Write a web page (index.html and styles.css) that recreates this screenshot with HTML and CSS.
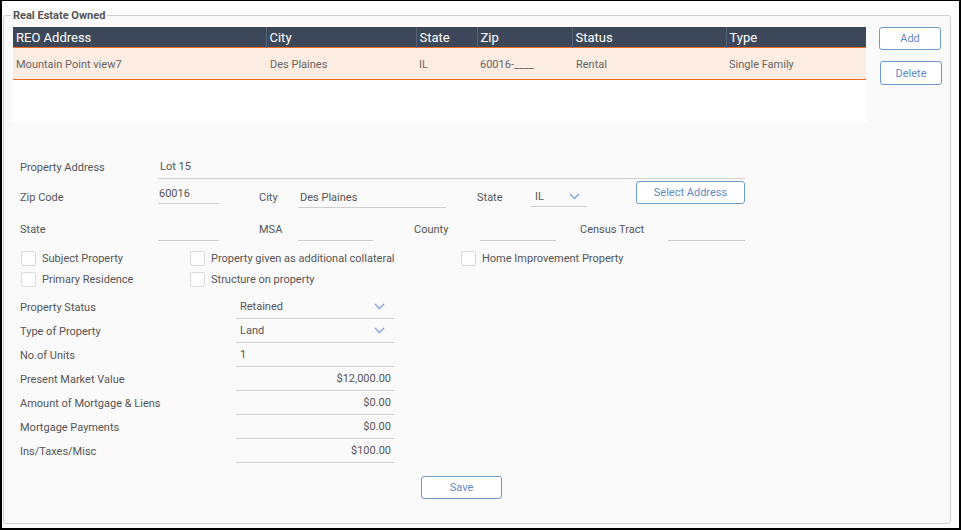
FILE: index.html
```html
<!DOCTYPE html>
<html>
<head>
<meta charset="utf-8">
<link rel="stylesheet" href="styles.css">
</head>
<body>
<div class="frame">
  <fieldset class="reo">
    <legend>Real Estate Owned</legend>
    <div class="top">
      <div class="grid">
        <table class="tbl">
          <colgroup>
            <col style="width:253px"><col style="width:150px"><col style="width:61px"><col style="width:95px"><col style="width:154px"><col style="width:140px">
          </colgroup>
          <thead>
            <tr><th>REO Address</th><th>City</th><th>State</th><th>Zip</th><th>Status</th><th class="last">Type</th></tr>
          </thead>
          <tbody>
            <tr class="sel"><td>Mountain Point view7</td><td>Des Plaines</td><td>IL</td><td>60016-____</td><td>Rental</td><td>Single Family</td></tr>
          </tbody>
        </table>
      </div>
      <div class="side">
        <button class="btn add">Add</button>
        <button class="btn del">Delete</button>
      </div>
    </div>

    <div class="form">
      <div class="row r1">
        <span class="lbl w138">Property Address</span>
        <span class="inp addr">Lot 15</span>
      </div>
      <div class="row r2">
        <span class="lbl w138">Zip Code</span>
        <span class="inp zip">60016</span>
        <span class="lbl city-l">City</span>
        <span class="inp city">Des Plaines</span>
        <span class="lbl state-l">State</span>
        <span class="inp sel state"><span>IL</span><svg class="chev" width="11" height="7" viewBox="0 0 11 7"><path d="M1 1l4.5 4.5L10 1" fill="none" stroke="#7ea3d6" stroke-width="1.4"/></svg></span>
        <button class="btn seladdr">Select Address</button>
      </div>
      <div class="row r3">
        <span class="lbl w138">State</span>
        <span class="inp e1"></span>
        <span class="lbl msa-l">MSA</span>
        <span class="inp e2"></span>
        <span class="lbl county-l">County</span>
        <span class="inp e3"></span>
        <span class="lbl census-l">Census Tract</span>
        <span class="inp e4"></span>
      </div>
      <div class="checks c1">
        <label class="chk g1"><span class="box"></span>Subject Property</label>
        <label class="chk g2"><span class="box"></span>Property given as additional collateral</label>
        <label class="chk"><span class="box"></span>Home Improvement Property</label>
      </div>
      <div class="checks c2">
        <label class="chk g1"><span class="box"></span>Primary Residence</label>
        <label class="chk g2"><span class="box"></span>Structure on property</label>
      </div>

      <div class="list">
        <div class="lrow"><span class="lbl w216">Property Status</span><span class="linp"><span>Retained</span><svg class="chev2" width="11" height="7" viewBox="0 0 11 7"><path d="M1 1l4.5 4.5L10 1" fill="none" stroke="#7ea3d6" stroke-width="1.4"/></svg></span></div>
        <div class="lrow"><span class="lbl w216">Type of Property</span><span class="linp"><span>Land</span><svg class="chev2" width="11" height="7" viewBox="0 0 11 7"><path d="M1 1l4.5 4.5L10 1" fill="none" stroke="#7ea3d6" stroke-width="1.4"/></svg></span></div>
        <div class="lrow"><span class="lbl w216">No.of Units</span><span class="linp">1</span></div>
        <div class="lrow"><span class="lbl w216">Present Market Value</span><span class="linp num">$12,000.00</span></div>
        <div class="lrow"><span class="lbl w216">Amount of Mortgage &amp; Liens</span><span class="linp num">$0.00</span></div>
        <div class="lrow"><span class="lbl w216">Mortgage Payments</span><span class="linp num">$0.00</span></div>
        <div class="lrow"><span class="lbl w216">Ins/Taxes/Misc</span><span class="linp num">$100.00</span></div>
      </div>

      <button class="btn save">Save</button>
    </div>
  </fieldset>
</div>
</body>
</html>
```

FILE: styles.css
```css
* { box-sizing: border-box; }
html, body { margin: 0; padding: 0; background: #fff; }
body { font-family: Roboto, "Noto Sans", Arial, sans-serif; font-size: 11px; color: #555; }

.frame {
  width: 961px;
  height: 530px;
  border: 2px solid #000;
  border-top-width: 1px;
  padding: 8px 0 0 1px;
}

.reo {
  margin: 0;
  width: 948px;
  height: 515px;
  border: 1px solid #d0d0d0;
  border-radius: 3px;
  background: #fafafa;
  padding: 5px 0 0 9px;
  min-width: 0;
}
.reo legend {
  font-weight: bold;
  font-size: 11px;
  line-height: 13px;
  color: #555;
  padding: 0 2px;
  margin-left: -2px;
}

.top { display: flex; align-items: flex-start; }
.grid {
  width: 853px;
  height: 95px;
  background: #fff;
}
.tbl {
  border-collapse: collapse;
  table-layout: fixed;
  width: 853px;
}
.tbl th {
  background: #3c4859;
  color: #fff;
  font-weight: normal;
  font-size: 13px;
  text-align: left;
  height: 20px;
  padding: 1px 0 0 3px;
  line-height: 19px;
  border-right: 1px solid #55627a;
  white-space: nowrap;
}
.tbl th.last { border-right: none; }
.tbl td {
  background: #fdece1;
  color: #666;
  font-size: 11px;
  height: 32px;
  padding: 2px 0 0 3px;
  border-top: 1px solid #f26b1d;
  border-bottom: 1px solid #f26b1d;
  white-space: nowrap;
}
.tbl td:nth-child(2) { padding-left: 4px; }
.tbl td:nth-child(4) { padding-left: 3px; }
.tbl td:nth-child(5) { padding-left: 4px; }

.side { display: flex; flex-direction: column; margin-left: 13px; }
.btn {
  font-family: Roboto, "Noto Sans", Arial, sans-serif;
  font-size: 11px;
  color: #5e8ac7;
  background: #fff;
  border: 1px solid #6f98cd;
  border-radius: 3px;
  padding: 0;
  cursor: pointer;
}
.add { width: 62px; height: 23px; }
.del { width: 62px; height: 24px; margin-top: 11px; margin-left: 1px; }

.form { padding-left: 7px; margin-top: 33px; }
.row { display: flex; align-items: flex-start; }
.lbl { display: inline-block; line-height: 14px; white-space: nowrap; color: #555; }
.w138 { width: 138px; }
.inp {
  display: inline-block;
  border-bottom: 1px solid #cfcfcf;
  line-height: 18px;
  color: #555;
  padding-left: 2px;
}

.r1 { height: 26px; }
.r1 .lbl { margin-top: 6px; }
.r1 .addr { width: 587px; height: 24px; padding-top: 3px; }

.r2 { height: 26px; }
.r2 .lbl { margin-top: 10px; }
.zip { width: 61px; height: 19px; margin-top: 4px; padding-left: 1px; }
.city-l { margin-left: 40px; width: 39px; }
.city { width: 148px; height: 20px; margin-top: 7px; padding-top: 1px; }
.state-l { margin-left: 31px; width: 53px; }
.state { width: 57px; height: 20px; margin-top: 6px; padding-left: 5px; display: inline-flex; align-items: center; justify-content: space-between; padding-right: 7px; }
.seladdr { width: 109px; height: 23px; margin-left: 49px; }

.r3 { height: 35px; }
.r3 .lbl { margin-top: 16px; }
.r3 .inp { height: 20px; margin-top: 14px; }
.e1 { width: 61px; }
.msa-l { margin-left: 40px; width: 39px; }
.e2 { width: 75px; }
.county-l { margin-left: 41px; width: 66px; }
.e3 { width: 76px; }
.census-l { margin-left: 24px; width: 88px; }
.e4 { width: 77px; }

.checks { display: flex; height: 15px; margin-left: 1px; }
.c1 { margin-top: 9px; }
.c2 { margin-top: 6px; }
.chk { display: flex; align-items: center; line-height: 15px; color: #555; white-space: nowrap; }
.g1 { width: 169px; }
.g2 { width: 271px; }
.box {
  width: 15px;
  height: 15px;
  border: 1px solid #dadada;
  border-radius: 2px;
  background: #fff;
  margin-right: 6px;
}

.list { margin-top: 8px; }
.lrow { display: flex; height: 24px; align-items: flex-start; }
.lrow .lbl { margin-top: 6px; }
.w216 { width: 216px; }
.linp {
  width: 158px;
  height: 24px;
  border-bottom: 1px solid #cfcfcf;
  padding: 3px 0 0 4px;
  line-height: 18px;
  color: #555;
  display: flex;
  justify-content: space-between;
  align-items: flex-start;
}
.linp.num { justify-content: flex-end; padding-right: 3px; }
.chev2 { margin: 5px 9px 0 0; }

.save { width: 81px; height: 23px; margin: 13px 0 0 401px; display: block; }
```
